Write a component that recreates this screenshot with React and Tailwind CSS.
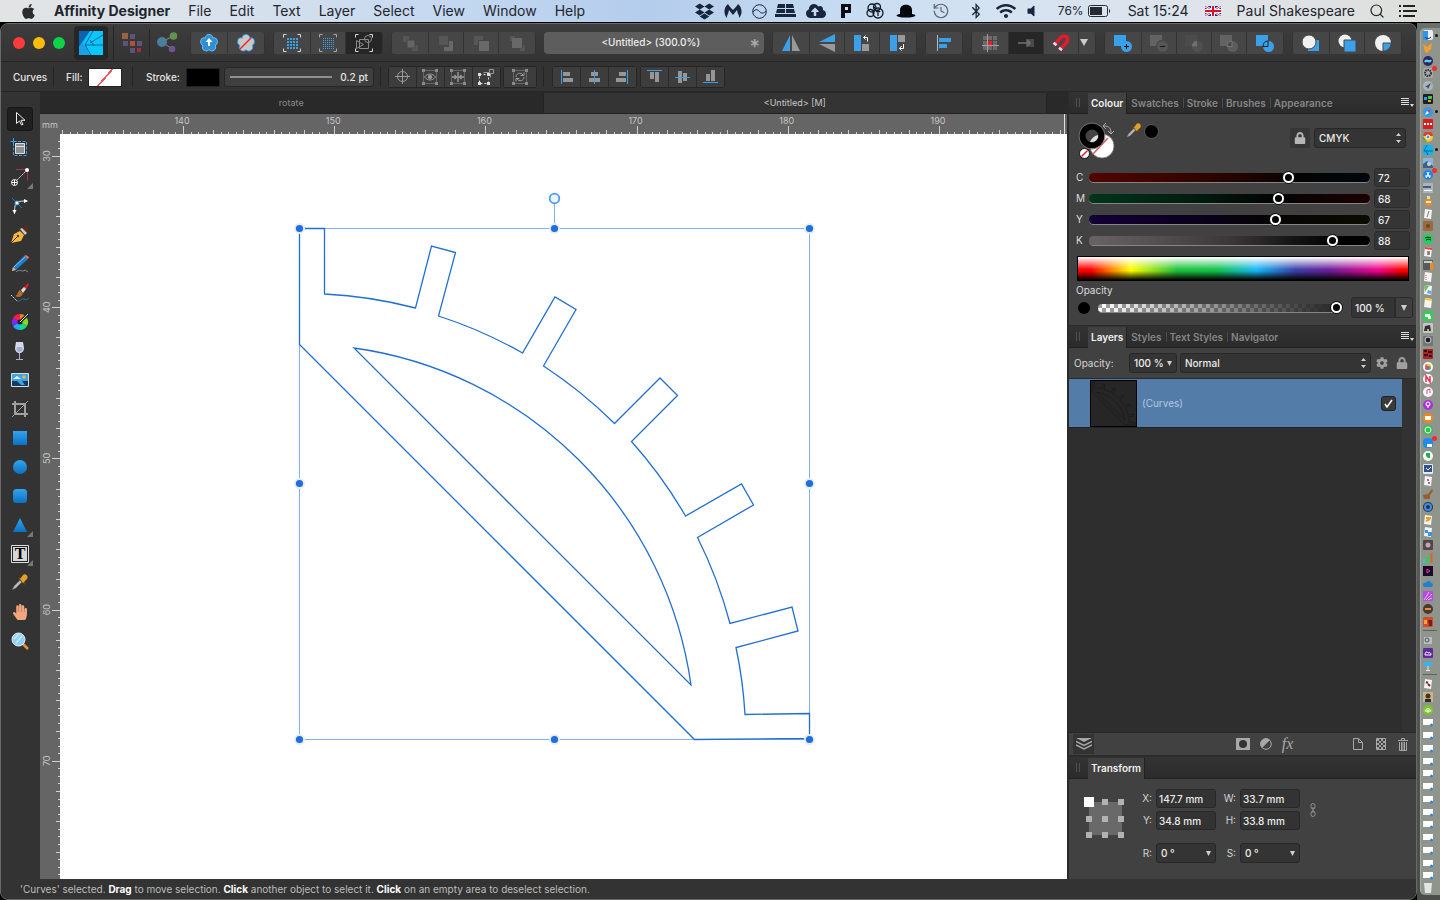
import { useState } from "react";
import {
  FaApple,
  FaBluetoothB,
  FaCloudUploadAlt,
  FaCog,
  FaDropbox,
  FaHandPaper,
  FaLock,
  FaVolumeOff,
  FaWifi,
} from "react-icons/fa";
import { History, Search } from "lucide-react";

const BLUE = "#3aa0e9";
const PX_PER_MM = 15.12;

const menus = ["File", "Edit", "Text", "Layer", "Select", "View", "Window", "Help"];

/* ---------- menu bar ---------- */

function MenuBar() {
  return (
    <header className="flex h-[22px] shrink-0 items-center justify-between bg-[linear-gradient(90deg,#e2e4e4,#d9e2ec_15%,#c3d7f0_32%,#b4cdec_45%,#c6dbf1_58%,#d3e2f2_68%,#dfe4ea_84%,#dedfda)] pr-[23px] pl-5 text-[14px] leading-[22px] text-[#22262c]">
      <nav className="flex items-center gap-[18px]">
        <button aria-label="Apple menu" className="w-4">
          <FaApple className="size-[17px] text-[#2c2c2c]" />
        </button>
        <button className="font-bold">Affinity Designer</button>
        {menus.map((menu) => (
          <button key={menu}>{menu}</button>
        ))}
      </nav>
      <div className="flex items-center">
        <div className="flex items-center text-[#17263c]">
          <FaDropbox className="size-[19px]" />
          <svg className="ml-2.5 h-4 w-[18px]" viewBox="0 0 18 16">
            <path
              d="M4 1C0 4-1 11 3 15c0-2 0-3 1-4l1-4 4 5 4-5 1 4c1 1 1 2 1 4 4-4 3-11-1-14-1 2-3 4-5 6C7 5 5 3 4 1z"
              fill="currentColor"
            />
          </svg>
          <svg className="ml-2.5 size-[15px]" viewBox="0 0 15 15">
            <circle cx="7.5" cy="7.5" r="6.8" fill="none" stroke="currentColor" />
            <path d="M1 8c3-4 5-2 7 0s4 1 6-1" fill="none" stroke="currentColor" />
          </svg>
          <svg className="ml-2 h-4 w-[21px]" viewBox="0 0 21 16" fill="currentColor">
            <path d="M3 1h7v4H2zM11 1h7l1 4h-8zM2 6h8v4H1zM11 6h8l1 4h-9zM0 11h21v3H0z" />
          </svg>
          <FaCloudUploadAlt className="ml-2.5 size-5" />
          <svg className="ml-3.5 h-4 w-3" viewBox="0 0 12 16">
            <path d="M1 1h10v9H5v5H1z" fill="#080d16" />
            <path d="M5 4h3v3H5z" fill="#d3e2f2" />
          </svg>
          <svg
            className="ml-3.5 size-[18px]"
            viewBox="0 0 18 18"
            fill="none"
            stroke="#101a28"
            strokeWidth="1.3"
          >
            <circle cx="6" cy="6" r="4" />
            <circle cx="11" cy="5" r="3.5" />
            <circle cx="4.5" cy="11" r="3.5" />
            <circle cx="12" cy="11" r="5" />
            <path d="M12 8v6M10 10l2-2 2 2M8 5l2 2" />
          </svg>
          <svg className="ml-3 h-4 w-5" viewBox="0 0 20 16" fill="#05070c">
            <path d="M4 12V7c0-7 12-7 12 0v5z" />
            <ellipse cx="10" cy="12.5" rx="9.5" ry="2" />
          </svg>
          <History className="ml-4 size-[18px] text-[#5a6472]" strokeWidth={1.6} />
          <FaBluetoothB className="ml-5 h-4 w-3" />
          <FaWifi className="ml-3.5 size-5" />
          <FaVolumeOff className="ml-2 size-[14px]" />
        </div>
        <span className="ml-5 text-[12px]">76%</span>
        <svg className="ml-1 h-3 w-[23px]" viewBox="0 0 23 12">
          <rect x=".5" y=".5" width="19" height="11" rx="2" fill="none" stroke="#252b33" />
          <rect x="2" y="2" width="12" height="8" fill="#252b33" />
          <path d="M21 4c1.5.5 1.5 3.5 0 4z" fill="#252b33" />
        </svg>
        <time className="ml-[17px]">Sat 15:24</time>
        <svg className="ml-4 h-[10px] w-4" viewBox="0 0 16 10">
          <path d="M0 0h16v10H0z" fill="#1c2c8c" />
          <path d="M0 0l16 10M16 0L0 10" stroke="#fff" strokeWidth="2.4" />
          <path d="M0 0l16 10M16 0L0 10" stroke="#d8203a" strokeWidth=".8" />
          <path d="M8 0v10M0 5h16" stroke="#fff" strokeWidth="4" />
          <path d="M8 0v10M0 5h16" stroke="#d8102a" strokeWidth="2.2" />
        </svg>
        <button className="ml-4">Paul Shakespeare</button>
        <button aria-label="Spotlight" className="ml-3.5">
          <Search className="size-4" strokeWidth={1.8} />
        </button>
        <button aria-label="Notification Centre" className="ml-3.5">
          <svg className="h-3 w-[18px]" viewBox="0 0 18 12" fill="#222">
            <path d="M0 0h2v2H0zM4 0h12v2H4zM0 5h2v2H0zM4 5h14v2H4zM0 10h2v2H0zM4 10h12v2H4z" />
          </svg>
        </button>
      </div>
    </header>
  );
}

/* ---------- main toolbar ---------- */

function Group({ label, children }) {
  return (
    <div
      role="group"
      aria-label={label}
      className="flex h-[22px] shrink-0 gap-px overflow-hidden rounded-[4px] bg-[#333] px-px"
    >
      {children}
    </div>
  );
}

function BarButton({ label, active, children }) {
  return (
    <button
      aria-label={label}
      aria-pressed={active}
      className={
        active
          ? "flex w-[34px] items-center justify-center bg-[#262626] first:w-9 last:w-9"
          : "flex w-[34px] items-center justify-center bg-[#464646] first:w-9 last:w-9"
      }
    >
      {children}
    </button>
  );
}

function Icon({ children }) {
  return (
    <svg className="size-5" viewBox="0 0 20 20" fill="none">
      {children}
    </svg>
  );
}

function Brackets({ color = "#d8d8d8" }) {
  return (
    <path
      d="M1.5 4.5v-3h3M15.5 1.5h3v3M18.5 15.5v3h-3M4.5 18.5h-3v-3"
      stroke={color}
    />
  );
}

const petals = [
  [10, 5.5],
  [14.5, 8.7],
  [12.8, 14],
  [7.2, 14],
  [5.5, 8.7],
];

function Flower({ fill, edge }) {
  return (
    <>
      {petals.map(([x, y]) => (
        <circle key={x} cx={x} cy={y} r="4.4" fill={edge} />
      ))}
      {petals.map(([x, y]) => (
        <circle key={x} cx={x} cy={y} r="3.4" fill={fill} />
      ))}
      <circle cx="10" cy="10.3" r="4.5" fill={fill} />
    </>
  );
}

function DotGrid({ count, size, step }) {
  const start = Math.ceil((20 - (count - 1) * step - size) / 2);
  const cells = Array.from({ length: count * count });
  return cells.map((_, i) => (
    <rect
      key={i}
      x={start + (i % count) * step}
      y={start + Math.floor(i / count) * step}
      width={size}
      height={size}
      fill={BLUE}
    />
  ));
}

function MainToolbar() {
  return (
    <div className="flex h-[38px] shrink-0 items-center gap-2 border-b border-[#252525] bg-linear-to-b from-[#3c3c3c] to-[#343434] pr-[14px] pl-3">
      <div className="flex gap-2">
        <button aria-label="Close" className="size-3 rounded-full bg-[#fc3b3c]" />
        <button aria-label="Minimise" className="size-3 rounded-full bg-[#fdbc09]" />
        <button aria-label="Zoom" className="size-3 rounded-full bg-[#0bd247]" />
      </div>

      <div className="mr-1 ml-px flex items-center">
        <button
          aria-label="Designer Persona"
          className="flex size-[34px] items-center justify-center rounded-[4px] bg-[#262626]"
        >
          <svg className="size-6" viewBox="0 0 24 24">
            <path d="M0 0h24v24H0z" fill="#06c8fd" />
            <path d="M0 0h11L0 16z" fill="#0b63b0" />
            <path d="M11 0L4 12l7 12H0V16z" fill="#18a0e8" />
            <path
              d="M14 0L6 14M24 4L11 12M6 14h18M6 14l6 10M11 9l4 6"
              stroke="#055f9c"
              fill="none"
            />
          </svg>
        </button>
        <span className="ml-[5px] h-[34px] w-px bg-[#262626]" />
        <button aria-label="Pixel Persona" className="ml-2">
          <svg className="size-5" viewBox="0 0 20 20">
            <path d="M0 0h6v6H0z" fill="#9c6240" />
            <path d="M8 1h5v5H8zM1 8h5v5H1zM15 8h5v5h-5zM8 15h5v5H8z" fill="#5b5478" />
            <path d="M8 8h5v5H8z" fill="#b14f3c" />
            <path d="M15 15h4v4h-4z" fill="#a32d3e" />
          </svg>
        </button>
        <span className="ml-[7px] h-[28px] w-px bg-[#262626]" />
        <button aria-label="Export Persona" className="ml-[7px]">
          <svg className="size-[21px]" viewBox="0 0 21 21">
            <path d="M5 10l11-6M5 10l10 7" stroke="#888" />
            <circle cx="5" cy="10" r="5" fill="#497e9e" />
            <circle cx="16.5" cy="4" r="3.8" fill="#66904f" />
            <circle cx="15" cy="17" r="3.3" fill="#6c5590" />
          </svg>
        </button>
      </div>

      <Group label="Defaults">
        <BarButton label="Synchronise from selection">
          <Icon>
            <Flower fill="#2f8fd6" edge="#6fbcf2" />
            <path d="M10 5l3.5 4H11v4H9V9H6.500z" fill="#fff" />
          </Icon>
        </BarButton>
        <BarButton label="Revert defaults">
          <Icon>
            <Flower fill="#c9c9c9" edge={BLUE} />
            <path d="M4 16L15 5" stroke="#e8252c" strokeWidth="1.5" />
          </Icon>
        </BarButton>
      </Group>

      <Group label="Grid">
        <BarButton label="Show grid">
          <Icon>
            <Brackets />
            <DotGrid count={4} size={2} step={3} />
          </Icon>
        </BarButton>
        <BarButton label="Snap to grid">
          <Icon>
            <Brackets color="#a8a8a8" />
            <DotGrid count={6} size={1} step={2} />
          </Icon>
        </BarButton>
        <BarButton label="Show bounds" active>
          <Icon>
            <Brackets />
            <path d="M5.5 6.5h9v9h-9zM2.500 7.5l7 4-7 4z" stroke="#8a8a8a" />
            <circle cx="14" cy="6" r="3.5" stroke="#8a8a8a" />
          </Icon>
        </BarButton>
      </Group>

      <Group label="Arrange">
        <BarButton label="Move to back">
          <Icon>
            <path d="M3 3h6v6H3zM12 12h6v6h-6z" fill="#565656" />
            <path d="M7 7h8v8H7z" fill="#646464" stroke="#464646" />
          </Icon>
        </BarButton>
        <BarButton label="Move back one">
          <Icon>
            <path d="M3 3h9v9H3z" fill="#565656" />
            <path d="M13 8h4v10H8v-4h5z" fill="#686868" />
          </Icon>
        </BarButton>
        <BarButton label="Move forward one">
          <Icon>
            <path d="M3 3h9v4H7v5H3z" fill="#565656" />
            <path d="M8 8h10v10H8z" fill="#686868" />
          </Icon>
        </BarButton>
        <BarButton label="Move to front">
          <Icon>
            <path d="M3 3h5v2H5v3H3zM13 15h3v-3h2v6h-5z" fill="#565656" />
            <path d="M5 5h10v10H5z" fill="#686868" />
          </Icon>
        </BarButton>
      </Group>

      <div className="flex h-[22px] min-w-0 flex-1 items-center rounded-[4px] bg-[#5d5d5d] px-1 text-[10px] font-medium text-[#ececec]">
        <span className="flex-1 truncate pl-1 text-center">&lt;Untitled&gt; (300.0%)</span>
        <span className="h-4 text-[20px] leading-6 text-[#aaa]">*</span>
      </div>

      <Group label="Transform">
        <BarButton label="Flip horizontal">
          <Icon>
            <path d="M9 2v16H1z" fill={BLUE} />
            <path d="M11 2v16h8z" fill="#999" />
          </Icon>
        </BarButton>
        <BarButton label="Flip vertical">
          <Icon>
            <path d="M2 9h16V1z" fill={BLUE} />
            <path d="M2 11h16v8z" fill="#999" />
          </Icon>
        </BarButton>
        <BarButton label="Rotate anticlockwise">
          <Icon>
            <path d="M2 2h7v16H2z" fill={BLUE} />
            <path d="M10 11h7v7h-7z" fill="#999" />
            <path d="M12 4.5h3.5v4M13.5 2.5l-2 2 2 2" stroke="#fff" />
          </Icon>
        </BarButton>
        <BarButton label="Rotate clockwise">
          <Icon>
            <path d="M2 2h7v16H2z" fill={BLUE} />
            <path d="M10 2h7v7h-7z" fill="#999" />
            <path d="M15.5 11v4.5h-4M13.5 13l-2 2.500 2 2" stroke="#fff" />
          </Icon>
        </BarButton>
      </Group>

      <Group label="Alignment">
        <BarButton label="Align">
          <Icon>
            <path d="M3.5 2v16" stroke="#bbb" />
            <path d="M5 5h12v4H5zM5 11h8v4H5z" fill={BLUE} />
          </Icon>
        </BarButton>
      </Group>

      <Group label="Snapping">
        <BarButton label="Force pixel alignment">
          <Icon>
            <path
              d="M3 3h4v4H3zM8 3h4v4H8zM13 3h4v4h-4zM3 8h4v4H3zM13 8h4v4h-4zM3 13h4v4H3zM8 13h4v4H8zM13 13h4v4h-4z"
              fill="#6a6a6a"
            />
            <path d="M7.5 1v18M2 12.5h17" stroke="#a0a0a0" />
            <path d="M8 8h4v4H8z" fill="#f51b28" />
          </Icon>
        </BarButton>
        <BarButton label="Move by whole pixels" active>
          <Icon>
            <path d="M10 6h8v8h-8z" fill="#4a4a4a" />
            <path d="M2 10h12M11 7l3 3-3 3" stroke="#727272" strokeWidth="1.5" />
          </Icon>
        </BarButton>
        <BarButton label="Snapping">
          <Icon>
            <path
              d="M4 11l6-6.500c4-4 9 1 5.500 5L9.500 16"
              stroke="#e8192c"
              strokeWidth="3.6"
            />
            <path d="M2.500 9.700l3 2.600M8 14.700l3 2.600" stroke="#f0d5d8" strokeWidth="2.6" />
          </Icon>
        </BarButton>
        <button
          aria-label="Snapping options"
          className="flex w-4 items-center justify-center bg-[#464646]"
        >
          <svg className="mr-1.5 h-[7px] w-2" viewBox="0 0 8 7">
            <path d="M0 0h8L4 7z" fill="#ccc" />
          </svg>
        </button>
      </Group>

      <Group label="Boolean operations">
        <BarButton label="Add">
          <Icon>
            <path d="M1 2h12v11H1z" fill={BLUE} />
            <circle cx="13.5" cy="13.5" r="5.5" fill={BLUE} />
            <path d="M11 13.5h5M13.5 11v5" stroke="#151515" />
          </Icon>
        </BarButton>
        <BarButton label="Subtract">
          <Icon>
            <path d="M1 2h12v5c-4 0-6 3-6 6H1z" fill="#636363" />
            <circle cx="13.5" cy="13.5" r="5.5" fill="#555" />
            <path d="M11 13.5h5" stroke="#151515" />
          </Icon>
        </BarButton>
        <BarButton label="Intersect">
          <Icon>
            <path d="M1 2h12v11H1z" fill="#4c4c4c" />
            <circle cx="13.5" cy="13.5" r="5.5" fill="#505050" />
            <path d="M13 8v5.5H8C8 10 10 8 13 8z" fill="#707070" />
          </Icon>
        </BarButton>
        <BarButton label="Divide">
          <Icon>
            <path d="M1 2h12v11H1z" fill="#636363" />
            <circle cx="13.5" cy="13.5" r="5.5" fill="#5d5d5d" />
            <path d="M13 8v5.5H8C8 10 10 8 13 8z" fill="#484848" stroke="#777" />
          </Icon>
        </BarButton>
        <BarButton label="Combine">
          <Icon>
            <path d="M1 2h12v11H1z" fill={BLUE} />
            <circle cx="13.5" cy="13.5" r="5.5" fill={BLUE} />
            <path d="M13 8v5.5H8C8 10 10 8 13 8z" fill={BLUE} stroke="#222" />
          </Icon>
        </BarButton>
      </Group>

      <Group label="Insert target">
        <BarButton label="Insert behind">
          <Icon>
            <path d="M7 7h11v11H7z" fill={BLUE} />
            <circle cx="8" cy="9" r="7" fill="#f0f0f0" stroke="#464646" />
          </Icon>
        </BarButton>
        <BarButton label="Insert on top">
          <Icon>
            <circle cx="8" cy="8" r="6.5" fill="#f0f0f0" />
            <path d="M7 7h12v12H7z" fill={BLUE} stroke="#464646" />
          </Icon>
        </BarButton>
        <BarButton label="Insert inside">
          <Icon>
            <circle cx="10" cy="10" r="8" fill="#f0f0f0" />
            <path d="M10 10h8c0 5-4 8-8 8z" fill={BLUE} stroke="#464646" />
          </Icon>
        </BarButton>
      </Group>
    </div>
  );
}

/* ---------- context toolbar ---------- */

function SmallGroup({ label, children }) {
  return (
    <div
      role="group"
      aria-label={label}
      className="flex h-[22px] shrink-0 gap-px rounded-[3px] border border-[#252525] bg-[#2a2a2a]"
    >
      {children}
    </div>
  );
}

function SmallButton({ label, children }) {
  return (
    <button
      aria-label={label}
      className="flex w-[27px] items-center justify-center bg-[#3d3d3d]"
    >
      <svg className="h-4 w-[17px]" viewBox="0 0 17 16" fill="none" stroke="#9a9a9a">
        {children}
      </svg>
    </button>
  );
}

function CornerDots() {
  return (
    <>
      <path d="M1.5 1.5h13v13h-13z" stroke="#666" />
      <path d="M0 0h3v3H0zM13 0h3v3h-3zM0 13h3v3H0zM13 13h3v3h-3z" fill="#8a8a8a" stroke="none" />
    </>
  );
}

function Separator() {
  return <span className="h-5 w-px shrink-0 bg-[#242424]" />;
}

function ContextToolbar() {
  return (
    <div className="flex h-[30px] shrink-0 items-center border-b border-[#282828] bg-[#333] pt-px pl-3 text-[10px] font-medium text-[#e4e4e4]">
      <span className="w-10">Curves</span>
      <Separator />
      <span className="ml-3 w-[22px]">Fill:</span>
      <button
        aria-label="Fill colour"
        className="h-[19px] w-[34px] border border-[#222] bg-[linear-gradient(131deg,#fff_48%,#f0575d_48%,#f0575d_53%,#fff_53%)]"
      />
      <span className="w-2.5" />
      <Separator />
      <span className="ml-[13px] w-10">Stroke:</span>
      <button aria-label="Stroke colour" className="h-[19px] w-[34px] border border-[#222] bg-black" />
      <button
        aria-label="Stroke width"
        className="mr-1.5 ml-1 flex h-5 w-[150px] items-center gap-2 rounded-[3px] border border-[#262626] bg-[#3f3f3f] px-[5px]"
      >
        <span className="h-0.5 flex-1 bg-[#8f8f8f]" />
        0.2 pt
      </button>
      <Separator />
      <div className="mr-1.5 ml-[7px] flex gap-0.5">
        <SmallGroup label="Selection">
          <SmallButton label="Show centre">
            <circle cx="8.5" cy="7.5" r="5" />
            <path d="M8.5 0v15M1 7.5h15" />
          </SmallButton>
          <SmallButton label="Hide selection">
            <CornerDots />
            <path d="M2.5 8c3-4 8-4 11 0-3 4-8 4-11 0z" />
            <circle cx="8" cy="8" r="1.8" fill="#9a9a9a" />
          </SmallButton>
          <SmallButton label="Transform separately">
            <CornerDots />
            <path d="M8 3v10M2 8h4M10 8h4M4.5 6l2 2-2 2M11.5 6l-2 2 2 2" strokeWidth="1.4" />
          </SmallButton>
          <SmallButton label="Transform mode">
            <path d="M5.5 3.5h6v-3h4v4h-3v4" />
            <path d="M1.5 5.5h9v9h-9z" stroke="#ddd" strokeDasharray="2 2" />
            <path d="M0 4h3v3H0zM9 4h3v3H9zM0 13h3v3H0zM9 13h3v3H9z" fill="#ddd" stroke="none" />
          </SmallButton>
        </SmallGroup>
        <SmallGroup label="Cycle">
          <button
            aria-label="Cycle selection box"
            className="flex w-8 items-center justify-center bg-[#3d3d3d]"
          >
            <svg className="size-4" viewBox="0 0 16 16" fill="none" stroke="#9a9a9a">
              <CornerDots />
              <path d="M4 8c0-4 5-5 7-2M12 8c0 4-5 5-7 2M8.5 6.5H12V3.5M7.5 9.5H4v3" />
            </svg>
          </button>
        </SmallGroup>
      </div>
      <Separator />
      <div className="ml-2 flex gap-[3px]">
        <SmallGroup label="Horizontal alignment">
          <SmallButton label="Align left">
            <path d="M5 3h7v4H5zM5 9h10v4H5z" fill="#969696" stroke="none" />
            <path d="M3.5 1v14" stroke={BLUE} />
          </SmallButton>
          <SmallButton label="Align centre">
            <path d="M5 3h7v4H5zM3 9h11v4H3z" fill="#969696" stroke="none" />
            <path d="M8.5 1v14" stroke={BLUE} />
          </SmallButton>
          <SmallButton label="Align right">
            <path d="M5 3h7v4H5zM2 9h10v4H2z" fill="#969696" stroke="none" />
            <path d="M13.5 1v14" stroke={BLUE} />
          </SmallButton>
        </SmallGroup>
        <SmallGroup label="Vertical alignment">
          <SmallButton label="Align top">
            <path d="M4 3h4v7H4zM9 3h4v10H9z" fill="#969696" stroke="none" />
            <path d="M1 1.5h15" stroke={BLUE} />
          </SmallButton>
          <SmallButton label="Align middle">
            <path d="M4 2h4v12H4zM9 4h4v8H9z" fill="#969696" stroke="none" />
            <path d="M1 8.5h15" stroke={BLUE} />
          </SmallButton>
          <SmallButton label="Align bottom">
            <path d="M4 5h4v7H4zM9 1h4v11H9z" fill="#969696" stroke="none" />
            <path d="M1 13.5h15" stroke={BLUE} />
          </SmallButton>
        </SmallGroup>
      </div>
    </div>
  );
}

/* ---------- tools ---------- */

function Dropper() {
  return (
    <>
      <path d="M2 17l2-4 6-6 2 2-6 6z" fill="#b8b8b8" stroke="#555" strokeWidth=".5" />
      <path d="M9 5l6 6" stroke="#6b4a12" strokeWidth="2" />
      <path d="M10 6l3-4c2-2 6 1 4 4l-4 4z" fill="#e0a02a" />
    </>
  );
}

const tools = [
  {
    name: "Move Tool",
    art: <path d="M6.5 3.5v11l3-2.500 2 4 1.500-.7-2-4h4z" fill="#222" stroke="#eee" />,
  },
  {
    name: "Artboard Tool",
    art: (
      <>
        <path d="M3.5 3.5h13v14h-13z" stroke={BLUE} strokeDasharray="3 1.5" />
        <path d="M3.5 0v6M.5 3.5h6" stroke={BLUE} />
        <path d="M5.5 5.5h9v10h-9z" fill="#8f8f8f" stroke="#ddd" />
        <path d="M6 8.5h9" stroke="#ddd" />
      </>
    ),
  },
  {
    name: "Point Transform Tool",
    more: true,
    art: (
      <>
        <path d="M6 2.5h11.5v11" stroke="#a82e68" />
        <path d="M5 15L17 3" stroke="#ddd" strokeDasharray="2 1" />
        <circle cx="17" cy="3" r="2" fill="#fff" />
        <circle cx="4.5" cy="15.5" r="3" fill="#222" stroke="#fff" />
        <path d="M4.5 13v5M2 15.5h5" stroke="#fff" />
      </>
    ),
  },
  {
    name: "Node Tool",
    art: (
      <>
        <path d="M2 2l10 10" stroke="#2678b8" />
        <path d="M4.5 18c0-8 1-11 2.5-12 3-1 6-1 10-1" stroke="#ddd" />
        <path d="M14 3l4 2-4 2zM2.5 14l2 4 2-4z" fill="#fff" />
        <circle cx="7" cy="7" r="2" fill="#fff" stroke={BLUE} />
      </>
    ),
  },
  {
    name: "Pen Tool",
    art: (
      <>
        <path d="M13 4l3-3 3 2-3 4z" fill="#6e2415" />
        <path d="M10 4l2-1 5 5-2 2z" fill="#ccc" />
        <path d="M1 18l3-9 6-3 4 4-3 6z" fill="#f5b93f" />
        <path d="M1 18l6-6" stroke="#5a3a0c" />
        <circle cx="8" cy="11" r="1.2" fill="#5a3a0c" />
      </>
    ),
  },
  {
    name: "Pencil Tool",
    art: (
      <>
        <path d="M2 17l1-4L14 2l4 3L6 16z" fill="#1c7fd0" />
        <path d="M4 13L15 3" stroke="#7cc4f5" />
        <path d="M2 17l1-4 3 3z" fill="#f2b070" />
        <path d="M14 2l2-1 3 2-1 2z" fill="#e8745f" />
        <path d="M6 18c4-4 6 1 9-2l3 2" stroke="#8a8a8a" />
      </>
    ),
  },
  {
    name: "Vector Brush Tool",
    art: (
      <>
        <path d="M13 5l5-5 1 1-3 6z" fill="#e01b24" />
        <path d="M11 7l3-3 2 2-3 4z" fill="#ddd" />
        <path d="M5 13c3-1 2-4 5-6l3 3c-1 4-4 5-8 3z" fill="#b06b28" />
        <path d="M1 12l6 6" stroke="#ddd" strokeDasharray="2 1" />
        <path d="M7 18c3 1 5-3 7-2s3 1 5-1" stroke="#2e74b0" />
      </>
    ),
  },
  {
    name: "Fill Tool",
    art: (
      <>
        <path d="M10 10V2a8 8 0 0 1 7 4z" fill="#f7801d" />
        <path d="M10 10l7-4a8 8 0 0 1 0 8z" fill="#7ddc1f" />
        <path d="M10 10l7 4a8 8 0 0 1-7 4z" fill="#12d68a" />
        <path d="M10 10v8a8 8 0 0 1-7-4z" fill="#26a8f2" />
        <path d="M10 10l-7 4a8 8 0 0 1 0-8z" fill="#7a2af5" />
        <path d="M10 10L3 6a8 8 0 0 1 7-4z" fill="#f0204a" />
        <circle cx="10" cy="10" r="2.5" fill="#222" />
        <path d="M10 10l8-8" stroke="#222" strokeWidth="3" />
        <path d="M10 10l8-8" stroke="#ddd" />
      </>
    ),
  },
  {
    name: "Transparency Tool",
    art: (
      <>
        <path d="M6 1h7l1 6c0 3-2 5-4.5 5S5 10 5 7z" fill="#d3d9ea" />
        <path d="M7 6h5l.5 2c0 4-6 4-6 0z" fill="#a5aecb" />
        <path d="M9.5 12v6M6 18.5h7" stroke="#a7b0c9" />
      </>
    ),
  },
  {
    name: "Place Image Tool",
    art: (
      <>
        <path d="M1.5 3.5h17v13h-17z" fill="#3aa5ea" stroke="#ddd" />
        <path d="M2 11h16v5H2z" fill="#173a63" />
        <path d="M7 11h5l3 4h-4z" fill="#3aa5ea" />
        <path d="M3 9l4-3 4 3z" fill="#fff" />
        <circle cx="14" cy="7" r="1.8" fill="#f7b81d" />
      </>
    ),
  },
  {
    name: "Vector Crop Tool",
    art: (
      <>
        <path d="M5 2v13h13M2 5h13v13" stroke="#a0a0a0" strokeWidth="2" />
        <path d="M2 18L18 2" stroke="#a0a0a0" />
      </>
    ),
  },
  { name: "Rectangle Tool", art: <path d="M3 3h14v14H3z" fill="url(#shape)" /> },
  { name: "Ellipse Tool", art: <circle cx="10" cy="10" r="7" fill="url(#shape)" /> },
  {
    name: "Rounded Rectangle Tool",
    art: <rect x="3" y="3" width="14" height="14" rx="3.5" fill="url(#shape)" />,
  },
  { name: "Triangle Tool", more: true, art: <path d="M10 3l7 14H3z" fill="url(#shape)" /> },
  {
    name: "Artistic Text Tool",
    more: true,
    art: (
      <>
        <path d="M1.5 1.5h17v17h-17z" fill="#222" stroke="#ddd" />
        <path d="M3 3h14v14H3z" fill="#d5d5d5" />
        <text
          x="10"
          y="15"
          textAnchor="middle"
          fill="#000"
          className="font-['Liberation_Serif',serif] text-[16px] font-bold"
        >
          T
        </text>
      </>
    ),
  },
  { name: "Colour Picker Tool", art: <Dropper /> },
  { name: "View Tool", art: <FaHandPaper x="2" y="2" size="16" color="#f0a77c" /> },
  {
    name: "Zoom Tool",
    art: (
      <>
        <path d="M13 13l5 5" stroke="#e8923a" strokeWidth="2.5" />
        <circle cx="8.5" cy="8.5" r="6.5" fill="#8fd0fa" stroke="#e8eef2" />
        <path d="M4 8l5-5M6 12l6-7" stroke="#c9eaff" strokeWidth="1.5" />
      </>
    ),
  },
];

function ToolsPanel() {
  const [current, setCurrent] = useState("Move Tool");

  return (
    <aside className="flex w-[39px] shrink-0 flex-col items-start overflow-hidden bg-[#333] pt-3 pl-1.5">
      <svg className="absolute size-0">
        <linearGradient id="shape" x2="0" y2="1">
          <stop stopColor="#35a3ee" />
          <stop offset="1" stopColor="#0a72c2" />
        </linearGradient>
      </svg>
      {tools.map((tool) => (
        <button
          key={tool.name}
          aria-label={tool.name}
          onClick={() => setCurrent(tool.name)}
          className="relative flex h-[29px] w-[26px] shrink-0 items-center justify-center"
        >
          <span
            className={
              tool.name === current
                ? "flex h-6 w-[26px] items-center justify-center rounded-[3px] border border-[#161616] bg-[#202020]"
                : "flex h-6 w-[26px] items-center justify-center"
            }
          >
            <Icon>{tool.art}</Icon>
          </span>
          {tool.more && (
            <svg className="absolute right-0 bottom-0.5 size-[6px]" viewBox="0 0 6 6">
              <path d="M6 0v6H0z" fill="#777" />
            </svg>
          )}
        </button>
      ))}
    </aside>
  );
}

/* ---------- document ---------- */

function buildTicks(origin, length) {
  const ticks = [];
  const first = Math.ceil(-origin / (PX_PER_MM / 2));
  for (let i = first; origin + (i * PX_PER_MM) / 2 < length; i++) {
    const size = i % 20 === 0 ? 8 : i % 4 === 0 ? 4 : 2;
    ticks.push({ at: Math.round(origin + (i * PX_PER_MM) / 2), size });
  }
  return ticks;
}

const columnTicks = buildTicks(123, 2600);
const rowTicks = buildTicks(22, 1600);

function TopRuler() {
  return (
    <svg className="h-5 min-w-0 flex-1 bg-[#656565]" shapeRendering="crispEdges">
      {columnTicks.map((tick) => (
        <rect key={tick.at} x={tick.at} y={20 - tick.size} width="1" height={tick.size} fill="#d0d0d0" />
      ))}
      {[140, 150, 160, 170, 180, 190].map((mm, i) => (
        <text
          key={mm}
          x={122 + i * 10 * PX_PER_MM}
          y="10"
          textAnchor="middle"
          fill="#c4c4c4"
          className="text-[9px]"
        >
          {mm}
        </text>
      ))}
      <rect x="1004" width="1" height="20" fill="#e0e0e0" />
    </svg>
  );
}

function SideRuler() {
  return (
    <svg className="h-full w-5 shrink-0 bg-[#656565]" shapeRendering="crispEdges">
      {rowTicks.map((tick) => (
        <rect key={tick.at} x={20 - tick.size} y={tick.at} width={tick.size} height="1" fill="#d0d0d0" />
      ))}
      {[30, 40, 50, 60, 70].map((mm, i) => (
        <text
          key={mm}
          transform={`translate(10 ${22 + i * 10 * PX_PER_MM}) rotate(-90)`}
          textAnchor="middle"
          fill="#c4c4c4"
          className="text-[9px]"
        >
          {mm}
        </text>
      ))}
    </svg>
  );
}

const gearOutline =
  "M239.5 94.5H264.5V160A446 446 0 0 1 355.5 174L371.5 112L395.5 118.5L378.5 182A446 446 0 0 1 462.5 219L495 163L516 175.5L483.5 232A446 446 0 0 1 554.5 289.5L600 244L617.5 261.5L571.5 307.5A446 446 0 0 1 625.5 382L681.5 350L693.5 371L637.5 403.5A446 446 0 0 1 670 489.5L732 473L738 497L676 513.5A446 446 0 0 1 685 580.5L749.5 579.5V604.5L634.5 605.5L239.5 210.5Z";
const windowOutline = "M294 214A395.5 395.5 0 0 1 631 551Z";

const handles = [
  [239.5, 94.5],
  [494.5, 94.5],
  [749.5, 94.5],
  [239.5, 349.5],
  [749.5, 349.5],
  [239.5, 605.5],
  [494.5, 605.5],
  [749.5, 605.5],
];

function Canvas() {
  return (
    <svg className="h-full min-w-0 flex-1 bg-white" fill="none" role="img" aria-label="Drawing canvas">
      <rect x="239.5" y="94.5" width="510" height="511" stroke="#7fb2ec" />
      <path d="M494.5 69v25" stroke="#7fb2ec" />
      <path d={gearOutline} stroke="#226fd2" strokeWidth="1.3" />
      <path d={windowOutline} stroke="#226fd2" strokeWidth="1.3" />
      {handles.map(([x, y]) => (
        <g key={`${x}-${y}`}>
          <circle cx={x} cy={y} r="5.5" fill="#e9ecf1" />
          <circle cx={x} cy={y} r="3.6" fill="#1c6fdc" />
        </g>
      ))}
      <circle cx="494.5" cy="64.5" r="4.8" fill="#eef4fb" stroke="#4b9cf2" strokeWidth="1.8" />
    </svg>
  );
}

function DocumentArea() {
  return (
    <main className="flex min-w-0 flex-1 flex-col">
      <div className="flex h-[22px] shrink-0 border-b border-[#222] bg-[#292929] pt-px pr-5 text-[9px] text-[#c8c8c8]">
        <button className="flex-1 text-[#8a8a8a]">rotate</button>
        <button className="flex-1 border-x border-[#242424] bg-[#343434]">&lt;Untitled&gt; [M]</button>
      </div>
      <div className="flex shrink-0">
        <span className="h-5 w-5 bg-[#656565] text-center text-[9px] leading-[22px] text-[#c4c4c4]">
          mm
        </span>
        <TopRuler />
      </div>
      <div className="flex min-h-0 flex-1">
        <SideRuler />
        <Canvas />
      </div>
    </main>
  );
}

/* ---------- panels ---------- */

function PanelTabs({ tabs }) {
  return (
    <div className="flex h-[22px] shrink-0 items-end border-b border-[#222] bg-linear-to-b from-[#333] to-[#2b2b2b] pl-[7px] text-[10px] font-semibold text-[#858585]">
      <span className="mr-2 h-[9px] w-1 self-center border-x border-[#505050]" />
      {tabs.map((tab, i) => (
        <button
          key={tab}
          className={
            i === 0
              ? "-mb-px h-[21px] border-r border-[#222] bg-[#414141] px-[3px] text-[#f0f0f0]"
              : "flex h-5 items-center gap-[3px] pl-1"
          }
        >
          {i > 1 && <span className="h-[10px] w-px bg-[#4a4a4a]" />}
          {tab}
        </button>
      ))}
      {tabs.length > 1 && (
        <button aria-label="Panel options" className="mr-[2px] mb-1.5 ml-auto">
          <svg className="h-[9px] w-[13px]" viewBox="0 0 13 9">
            <path d="M0 .5h8M0 2.5h8M0 4.5h8M0 6.5h8" stroke="#ddd" />
            <path d="M9 6h4l-2 3z" fill="#ddd" />
          </svg>
        </button>
      )}
    </div>
  );
}

function Picker({ label, className, options, updown }) {
  return (
    <div className={`grid items-center ${className}`}>
      <select
        aria-label={label}
        className="col-start-1 row-start-1 h-5 w-full appearance-none rounded-[3px] border border-[#272727] bg-[#343434] px-1 text-[10px] font-medium text-[#ececec]"
      >
        {options.map((option) => (
          <option key={option}>{option}</option>
        ))}
      </select>
      <svg
        className="pointer-events-none col-start-1 row-start-1 mr-[5px] h-[10px] w-[5px] justify-self-end"
        viewBox="0 0 5 10"
        fill="#d0d0d0"
      >
        {updown ? <path d="M0 3l2.5-3L5 3zM0 7h5L2.5 10z" /> : <path d="M0 3h5L2.5 8z" />}
      </svg>
    </div>
  );
}

const thumb =
  "[&::-webkit-slider-thumb]:size-[11px] [&::-webkit-slider-thumb]:appearance-none [&::-webkit-slider-thumb]:rounded-full [&::-webkit-slider-thumb]:border-2 [&::-webkit-slider-thumb]:border-white [&::-webkit-slider-thumb]:bg-black [&::-webkit-slider-thumb]:shadow-[0_0_0_1px_#111]";

const channels = [
  {
    name: "C",
    value: 72,
    track: "bg-[linear-gradient(90deg,#520500,#260400_50%,#030303_75%,#02070b)]",
  },
  {
    name: "M",
    value: 68,
    track: "bg-[linear-gradient(90deg,#00351b,#001a0d_40%,#030404_65%,#1c0003)]",
  },
  {
    name: "Y",
    value: 67,
    track: "bg-[linear-gradient(90deg,#130036,#0b001e_35%,#050404_65%,#0b0b00)]",
  },
  {
    name: "K",
    value: 88,
    track: "bg-[linear-gradient(90deg,#696365,#3c3839_50%,#111_75%,#000_90%)]",
  },
];

function ChannelRow({ channel }) {
  const [value, setValue] = useState(channel.value);

  return (
    <div className="flex h-[21px] items-center">
      <label htmlFor={`channel-${channel.name}`} className="w-3 text-[10px]">
        {channel.name}
      </label>
      <input
        id={`channel-${channel.name}`}
        type="range"
        min="0"
        max="100"
        value={value}
        onChange={(event) => setValue(event.target.value)}
        className={`mr-1 ml-px h-[9px] min-w-0 flex-1 appearance-none rounded-full shadow-[0_1px_0_#858585] ${channel.track} ${thumb}`}
      />
      <input
        aria-label={`${channel.name} value`}
        value={value}
        onChange={(event) => setValue(event.target.value)}
        className="h-[19px] w-9 rounded-[3px] border border-[#2b2b2b] bg-[#353535] px-[3px] text-[10px] font-medium text-[#ececec]"
      />
    </div>
  );
}

function ColourPanel() {
  return (
    <section className="shrink-0 border-b border-[#2a2a2a]">
      <PanelTabs tabs={["Colour", "Swatches", "Stroke", "Brushes", "Appearance"]} />
      <div className="pt-2 pr-1.5 pb-[7px] pl-[7px] text-[#dcdcdc]">
        <div className="flex h-[45px] items-start">
          <button aria-label="Stroke and fill wells">
            <svg className="h-10 w-[42px]" viewBox="0 0 42 40" fill="none">
              <circle cx="26" cy="24" r="12" fill="#fff" stroke="#777" strokeWidth=".8" />
              <path d="M17 32l15-16" stroke="#e0555a" strokeWidth="1.5" />
              <circle cx="16" cy="14" r="7" fill="#444" />
              <path d="M14 20c1-3 4-6 8-7 1 4-3 8-8 7z" fill="#ddd" />
              <circle cx="16" cy="14" r="9.5" stroke="#000" strokeWidth="6" />
              <circle cx="16" cy="14" r="13" stroke="#777" strokeWidth=".8" />
              <circle cx="8.5" cy="31.5" r="5" fill="#fff" stroke="#111" />
              <path d="M5.5 34.5l6-6" stroke="#e01b24" strokeWidth="1.5" />
              <path d="M28 4c5 0 7 2 7 7M30 1l-3 3 3 3M32 9l3 3 3-3" stroke="#aaa" />
            </svg>
          </button>
          <button aria-label="Pick colour" className="ml-[7px]">
            <svg className="size-[18px]" viewBox="0 0 20 20" fill="none">
              <Dropper />
            </svg>
          </button>
          <button
            aria-label="Picked colour"
            className="mt-0.5 ml-px size-[15px] rounded-full border border-[#5e5e5e] bg-black"
          />
          <button
            aria-label="Lock colour"
            className="mt-1.5 mr-1 ml-auto flex h-5 w-5 items-center justify-center bg-[#363636]"
          >
            <FaLock className="size-3 text-[#b5b5b5]" />
          </button>
          <Picker
            label="Colour model"
            className="mt-1.5 mr-1 w-[92px]"
            options={["CMYK", "RGB", "HSL"]}
            updown
          />
        </div>
        {channels.map((channel) => (
          <ChannelRow key={channel.name} channel={channel} />
        ))}
        <div
          role="img"
          aria-label="Colour spectrum"
          className="mt-[5px] mr-px ml-px h-[25px] border border-black bg-[linear-gradient(180deg,#fff,#fff0_55%,#0000_60%,#000),linear-gradient(90deg,#f00_4%,#ff0_16%,#1ec23c_30%,#14c24a_42%,#16b8f5_54%,#3a3fa8_66%,#6a1f9a_76%,#f0058c_91%,#f00_98%)]"
        />
        <label htmlFor="colour-opacity" className="mt-[2px] block text-[10px] leading-[14px]">
          Opacity
        </label>
        <div className="flex h-[21px] items-center">
          <span className="ml-[2px] size-3 rounded-full bg-black" />
          <input
            id="colour-opacity"
            type="range"
            defaultValue="100"
            className={`mr-[9px] ml-2 h-2 min-w-0 flex-1 appearance-none rounded-full bg-[linear-gradient(90deg,transparent,#2c2c2c_95%),repeating-conic-gradient(#fff_0_25%,#a0a0a0_0_50%)] bg-[length:100%_100%,8px_8px] shadow-[0_1px_0_#858585] ${thumb}`}
          />
          <input
            aria-label="Opacity value"
            defaultValue="100 %"
            className="h-[21px] w-11 rounded-l-[3px] border border-[#2b2b2b] bg-[#353535] px-[3px] text-[10px] font-medium text-[#ececec]"
          />
          <button
            aria-label="Opacity options"
            className="-mr-[3px] flex h-[21px] w-[18px] items-center justify-center rounded-r-[3px] border border-[#2b2b2b] bg-[#3f3f3f]"
          >
            <svg className="h-[6px] w-[6px]" viewBox="0 0 6 6">
              <path d="M0 0h6L3 6z" fill="#ccc" />
            </svg>
          </button>
        </div>
      </div>
    </section>
  );
}

function LayersPanel() {
  const [visible, setVisible] = useState(true);

  return (
    <section className="flex min-h-0 flex-1 flex-col">
      <PanelTabs tabs={["Layers", "Styles", "Text Styles", "Navigator"]} />
      <div className="flex h-[31px] shrink-0 items-center border-b border-[#2a2a2a] pr-2 pl-[5px] text-[10px] text-[#d4d4d4]">
        <span className="w-[55px]">Opacity:</span>
        <Picker label="Layer opacity" className="mr-[3px] w-12" options={["100 %", "50 %"]} />
        <Picker
          label="Blend mode"
          className="min-w-0 flex-1"
          options={["Normal", "Multiply", "Screen"]}
          updown
        />
        <button aria-label="Blend ranges" className="ml-[5px]">
          <FaCog className="size-3 text-[#a0a0a0]" />
        </button>
        <button aria-label="Lock layer" className="ml-2">
          <FaLock className="size-3 text-[#a0a0a0]" />
        </button>
      </div>
      <div className="flex min-h-0 flex-1">
        <ul className="min-w-0 flex-1 bg-[#2e2e2e]">
          <li className="flex h-[49px] items-center border-b border-[#232323] bg-[#537ca9] pr-1.5 pl-[21px]">
            <svg className="size-[47px] border border-black bg-[#262626]" viewBox="225 80 540 540" fill="none">
              <path d={gearOutline} stroke="#1b1b1b" strokeWidth="9" />
              <path d={windowOutline} stroke="#1b1b1b" strokeWidth="9" />
            </svg>
            <label htmlFor="layer-visible" className="ml-[5px] flex-1 text-[10px] text-[#b3c8e0]">
              (Curves)
            </label>
            <span className="grid place-items-center">
              <input
                id="layer-visible"
                type="checkbox"
                checked={visible}
                onChange={(event) => setVisible(event.target.checked)}
                className="col-start-1 row-start-1 size-[15px] appearance-none rounded-[3px] border border-[#222] bg-[#3b3b3b]"
              />
              {visible && (
                <svg
                  className="pointer-events-none col-start-1 row-start-1 size-[9px]"
                  viewBox="0 0 9 9"
                  fill="none"
                >
                  <path d="M1 5l2 3 5-7" stroke="#fff" strokeWidth="1.5" />
                </svg>
              )}
            </span>
          </li>
        </ul>
        <div className="w-[14px] bg-[#323232]" />
      </div>
      <div className="flex h-[23px] shrink-0 items-center border-t border-[#272727] pr-2 pl-1 text-[#a8a8a8]">
        <button
          aria-label="Edit all layers"
          className="mr-auto flex h-5 w-[21px] items-center justify-center bg-[#333]"
        >
          <svg className="h-3 w-4" viewBox="0 0 16 12" fill="none" stroke="currentColor" strokeWidth="1.5">
            <path d="M0 0l8 4 8-4z" fill="currentColor" strokeWidth="0" />
            <path d="M0 3.5l8 4 8-4M0 7l8 4 8-4" />
          </svg>
        </button>
        <button aria-label="Mask layer">
          <svg className="h-3 w-[14px]" viewBox="0 0 14 12">
            <path d="M0 0h14v12H0z" fill="currentColor" />
            <circle cx="7" cy="6" r="4" fill="#333" />
          </svg>
        </button>
        <button aria-label="Adjustments" className="ml-2.5">
          <svg className="size-3" viewBox="0 0 12 12">
            <circle cx="6" cy="6" r="5.3" fill="none" stroke="currentColor" />
            <path d="M2 10A5.3 5.3 0 0 1 10 2z" fill="currentColor" />
          </svg>
        </button>
        <button
          aria-label="Layer effects"
          className="ml-2 w-[15px] font-['Liberation_Serif',serif] text-[16px] leading-5 italic"
        >
          fx
        </button>
        <button aria-label="Add layer" className="ml-[58px]">
          <svg className="h-3 w-[10px]" viewBox="0 0 10 12" fill="none" stroke="currentColor">
            <path d="M.5.5h5l4 4v7h-9zM5.5.5v4h4" />
          </svg>
        </button>
        <button aria-label="Add pixel layer" className="ml-[13px]">
          <svg className="h-3 w-[10px]" viewBox="0 0 10 12">
            <path d="M.5.5h9v11h-9z" fill="none" stroke="currentColor" />
            <path
              d="M1 1h2v2H1zM5 1h2v2H5zM3 3h2v2H3zM7 3h2v2H7zM1 5h2v2H1zM5 5h2v2H5zM3 7h2v2H3zM7 7h2v2H7zM1 9h2v2H1zM5 9h2v2H5z"
              fill="currentColor"
            />
          </svg>
        </button>
        <button aria-label="Delete layer" className="ml-3">
          <svg className="h-[13px] w-[10px]" viewBox="0 0 10 13" fill="none" stroke="currentColor">
            <path d="M0 2.5h10M3.5 2V.5h3V2M1.5 4v8.5h7V4M3.5 4v8M5 4v8M6.5 4v8" />
          </svg>
        </button>
      </div>
    </section>
  );
}

function TransformField({ label, value }) {
  return (
    <div className="flex items-center">
      <label htmlFor={`transform-${label}`} className="w-[17px] pr-1 text-right">
        {label}:
      </label>
      <input
        id={`transform-${label}`}
        defaultValue={value}
        className="h-[19px] w-[60px] rounded-[3px] border border-[#282828] bg-[#333] px-[2px] text-[10px] font-medium text-[#ececec]"
      />
    </div>
  );
}

function TransformPanel() {
  return (
    <section className="shrink-0 border-t-2 border-[#2c2c2c]">
      <PanelTabs tabs={["Transform"]} />
      <div className="flex h-[100px] pt-2.5 pl-[15px] text-[10px] text-[#d4d4d4]">
        <svg className="mt-2 h-[42px] w-[40px]" viewBox="0 0 40 42" fill="#b2b2b2">
          <path d="M5 5h33v33H5z" fill="#696969" />
          <path d="M18 2h6v6h-6zM34 2h6v6h-6zM2 19h6v6H2zM18 19h6v6h-6zM34 19h6v6h-6zM2 35h6v6H2zM18 35h6v6h-6zM34 35h6v6h-6z" />
          <path d="M0 0h10v10H0z" fill="#fff" />
        </svg>
        <div className="ml-[15px] grid auto-rows-min grid-cols-[77px_77px] gap-x-[7px] gap-y-[3px]">
          <TransformField label="X" value="147.7 mm" />
          <TransformField label="W" value="33.7 mm" />
          <TransformField label="Y" value="34.8 mm" />
          <TransformField label="H" value="33.8 mm" />
          <div className="mt-2.5 flex items-center">
            <span className="w-[17px] pr-1 text-right">R:</span>
            <Picker label="Rotation" className="w-[60px]" options={["0 °", "90 °"]} />
          </div>
          <div className="mt-2.5 flex items-center">
            <span className="w-[17px] pr-1 text-right">S:</span>
            <Picker label="Shear" className="w-[60px]" options={["0 °", "15 °"]} />
          </div>
        </div>
        <button aria-label="Lock aspect ratio" className="mt-3.5 ml-2.5 self-start">
          <svg className="h-[14px] w-[6px]" viewBox="0 0 6 14" fill="none" stroke="#8f8f8f">
            <rect x="1" y=".5" width="4" height="5.5" rx="2" />
            <rect x="1" y="8" width="4" height="5.5" rx="2" />
            <path d="M3 4v6" />
          </svg>
        </button>
      </div>
    </section>
  );
}

/* ---------- dock ---------- */

function Tile({ fill, round = 2, children }) {
  return (
    <>
      <rect width="10" height="10" rx={round} fill={fill} />
      {children}
    </>
  );
}

function Sheet({ children }) {
  return (
    <>
      <path d="M2 0l7 1-1 9-7-1z" fill="#f4f4f2" />
      {children}
    </>
  );
}

const dockApps = [
  { name: "Finder", running: true, art: <Tile fill="#e8eef5"><path d="M0 1h5v9H0z" fill="#2f95ee" /><path d="M2 7c2 2 4 2 6 0" stroke="#123" fill="none" /></Tile> },
  { name: "Swift", art: <path d="M0 1l4 3 5-4-1 6-4 4-2-1z" fill="#f5a02c" /> },
  { name: "Siri", art: <Tile fill="#35255e" round={5}><path d="M2 6c2-4 4 2 6-2" stroke="#58d8f5" strokeWidth="2" fill="none" /></Tile> },
  { name: "System Preferences", badge: true, art: <Tile fill="#a5a9ab"><circle cx="5" cy="5" r="3" fill="none" stroke="#333" strokeWidth="2" strokeDasharray="1.5 .7" /></Tile> },
  { name: "Launchpad", art: <Tile fill="#a9b4bd" round={5}><path d="M2 6l6-4-3 6-1-2z" fill="#3d4e5c" /></Tile> },
  { name: "Mission Control", art: <Tile fill="#1b2127" round={1}><path d="M1 3h3v3H1z" fill="#2d9be8" /><path d="M5 2h4v3H5z" fill="#46c444" /><path d="M5 6h3v2H5z" fill="#e8a02a" /></Tile> },
  { name: "Safari", running: true, art: <Tile fill="#2f9cf2" round={5}><path d="M8 2L6 6 4 4z" fill="#f03b35" /><path d="M2 8l2-4 2 2z" fill="#fff" /></Tile> },
  { name: "PDF Expert", art: <Tile fill="#dd1c1f" round={1}><path d="M1 5h8" stroke="#fff" strokeWidth="2" strokeDasharray="2 1" /></Tile> },
  { name: "Chrome", art: <Tile fill="#f5c526" round={5}><path d="M0 4a5 5 0 0 1 10 0z" fill="#e2402f" /><path d="M0 4l4 6A5 5 0 0 1 0 4z" fill="#36a650" /><circle cx="5" cy="5" r="2" fill="#4a8cf5" stroke="#fff" /></Tile> },
  { name: "Affinity Designer", running: true, art: <Tile fill="#12b4f0" round={1}><path d="M4 0L1 6h9M3 6l2 4" stroke="#0868a8" fill="none" /></Tile> },
  { name: "Preview", art: <Tile fill="#8fb5d6" round={1}><path d="M0 6l4-3 6 5v2H0z" fill="#38628a" /><circle cx="6" cy="6" r="2" fill="#c5d3dc" /></Tile> },
  { name: "App Store", badge: true, art: <Tile fill="#1f83f2" round={5}><path d="M3 8l3-6M7 8L4 2M2 6h6" stroke="#fff" /></Tile> },
  { name: "Scanner", art: <Tile fill="#aab4bf" round={1}><path d="M0 3h8v2H0z" fill="#44597b" /><path d="M1 7h8v1H1z" fill="#fff" /></Tile> },
  { name: "Glue", art: <><rect x="2" y="3" width="7" height="7" rx="2" fill="#e88b2b" /><path d="M4 0h3v3H4z" fill="#f1d9a2" /><path d="M3 5h5v2H3z" fill="#f8ecd2" /></> },
  { name: "TextEdit", art: <Sheet><path d="M6 2L4 8" stroke="#777" /></Sheet> },
  { name: "Contacts", art: <Tile fill="#9a6b3c" round={1}><circle cx="5" cy="5" r="2" fill="#6d4824" /></Tile> },
  { name: "Spotify", art: <Tile fill="#1ed05f" round={5}><path d="M2 4c2-1 4-1 6 0M3 6c2-1 3-1 5 0" stroke="#111" fill="none" /></Tile> },
  { name: "Calendar", art: <Sheet><path d="M2 0l7 1v2l-7-1z" fill="#e8433a" /><path d="M4 4h3v4H4z" fill="#888" /></Sheet> },
  { name: "Calculator", art: <Tile fill="#555b60" round={1}><path d="M7 2h3v8H7z" fill="#f08a24" /><path d="M1 1h8v2H1z" fill="#ccc" /></Tile> },
  { name: "Reminders", art: <Sheet><path d="M3 3v5" stroke="#e8584a" strokeDasharray="1 1" /></Sheet> },
  { name: "Maps", art: <Sheet><path d="M2 0l4 1-4 6z" fill="#69c45c" /><path d="M5 5l3 1v3l-4-1z" fill="#5aa7e8" /></Sheet> },
  { name: "Notes", art: <Sheet><path d="M2 0l7 1v2l-7-1z" fill="#f4cd36" /></Sheet> },
  { name: "Messages", art: <Tile fill="#31cf58"><path d="M2 3h5v3H2zM5 5h3v3H5z" fill="#fff" /></Tile> },
  { name: "Camera", art: <Tile fill="#c2c6c8" round={1}><path d="M2 3l5-1 1 6H1z" fill="#2c3136" /><path d="M4 6h2v2H4z" fill="#f0ab2a" /></Tile> },
  { name: "Webcam", art: <Tile fill="#70767a" round={1}><circle cx="5" cy="4" r="3" fill="#222" stroke="#ccc" /></Tile> },
  { name: "Photo Booth", art: <Tile fill="#a4262b" round={1}><path d="M1 2h3M5 3h4M1 6h4M6 7h3" stroke="#3b1012" strokeWidth="2" /></Tile> },
  { name: "Photos", art: <Tile fill="#f6f6f6" round={5}><circle cx="4" cy="4" r="2" fill="#f07a2a" /><circle cx="6" cy="4" r="2" fill="#e9c928" /><circle cx="6" cy="6" r="2" fill="#46b45a" /><circle cx="4" cy="6" r="2" fill="#c5449c" /></Tile> },
  { name: "News", art: <Tile fill="#f6f6f6" round={5}><path d="M3 8V2l4 6V2" stroke="#ee2f4e" strokeWidth="1.5" fill="none" /></Tile> },
  { name: "Music", art: <Tile fill="#f6f6f6" round={5}><path d="M4 7V3l3-1v4" stroke="#e746a0" fill="none" /></Tile> },
  { name: "Podcasts", art: <Tile fill="#a734d2" round={5}><circle cx="5" cy="4" r="2" fill="none" stroke="#fff" /><path d="M5 5v3" stroke="#fff" /></Tile> },
  { name: "Books", art: <Tile fill="#f5831c" round={5}><path d="M2 3h6v4H2z" fill="#fff" /></Tile> },
  { name: "WhatsApp", art: <Tile fill="#2fc351" round={5}><circle cx="5" cy="5" r="3" fill="none" stroke="#fff" /></Tile> },
  { name: "Cloud", badge: true, art: <Tile fill="#1e8ce8" round={4}><path d="M4 6h5v3H4z" fill="#fff" /></Tile> },
  { name: "Evernote", art: <Tile fill="#f6f6f6" round={5}><path d="M3 2h4v5H5L3 5z" fill="#20b04a" /></Tile> },
  { name: "Things", art: <Tile fill="#e5eaf0" round={1}><path d="M1 1h8v7H1z" fill="#31528c" /><path d="M3 4l2 2 3-3" stroke="#fff" fill="none" /></Tile> },
  { name: "Solitaire", art: <Sheet><path d="M4 3h2v2H4zM5 6h2v2H5z" fill="#d0569c" /></Sheet> },
  { name: "GarageBand", art: <path d="M0 6l5-1 4-5 1 2-3 4v4H1z" fill="#9a5c2c" /> },
  { name: "QuickTime", art: <Tile fill="#283238" round={5}><circle cx="5" cy="5" r="3" fill="none" stroke="#3f8cf0" strokeWidth="2" /></Tile> },
  { name: "Pages", art: <Sheet><path d="M3 3h5M3 6l4-2" stroke="#f09a2a" strokeWidth="2" /></Sheet> },
  { name: "Keynote", art: <Sheet><path d="M2 3h3v3H2zM5 5h4v4H5z" fill="#3c94e0" /></Sheet> },
  { name: "Image Capture", art: <Tile fill="#534549" round={1}><circle cx="5" cy="5" r="2.5" fill="#c2a8b2" /></Tile> },
  { name: "Numbers", art: <><path d="M0 6h2v4H0z" fill="#35c2e0" /><path d="M2.5 4h2v6h-2zM5 2h2v8H5z" fill="#3ec45c" /><path d="M7.500 0h2v10h-2z" fill="#f0563c" /></> },
  { name: "Premiere", art: <Tile fill="#190a26" round={0}><path d="M4 3l3 2-3 2z" fill="none" stroke="#e839b8" /></Tile> },
  { name: "OneDrive", art: <path d="M0 7c0-2 2-3 3-2 1-3 5-2 5 0 3 0 2 4 0 4H2C1 9 0 8 0 7z" fill="#1f7fd2" /> },
  { name: "Affinity Photo", art: <Tile fill="#b24be0" round={1}><path d="M1 9l5-8M3 9l6-6M5 9l4-2" stroke="#f0b8f5" /></Tile> },
  { name: "Disc Burner", art: <Tile fill="#4b3a2c" round={5}><path d="M2 5h6" stroke="#e88b4a" strokeWidth="2" /></Tile> },
  { name: "Shield", art: <Tile fill="#d84a2a" round={1}><path d="M5 3h4v6H6z" fill="#7c1d1a" /><path d="M1 3h3v4H1z" fill="#f0a43c" /></Tile> },
];

const dockUtilities = [
  { name: "Disk Utility", art: <><path d="M1 2h8v7H1z" fill="#b9bdbf" /><circle cx="4" cy="5" r="2" fill="none" stroke="#555" /></> },
  { name: "Cloud backup", art: <Tile fill="#5f2a9c" round={1}><path d="M2 7c0-3 2-4 3-2 2-1 3 0 3 2z" fill="none" stroke="#fff" /></Tile> },
  { name: "Presentation", art: <><path d="M1 1h8v4H1z" fill="#37b4f0" /><path d="M5 5v4M3 9.500h4" stroke="#e8eef2" /></> },
];

const dockFiles = [
  { name: "Document", art: <Sheet><path d="M3 3l2 1M5 5l2 2" stroke="#7c2d2a" strokeWidth="2" /></Sheet> },
  { name: "Portrait", art: <Tile fill="#c9b78a" round={0}><circle cx="5" cy="4" r="2.5" fill="#4b2f22" /><path d="M2 7h6v3H2z" fill="#2c2c2c" /></Tile> },
  { name: "Updater", art: <Tile fill="#7ac62a" round={5}><path d="M2 6c1-3 5-3 6 0zM5 5v3" stroke="#fff" fill="none" /></Tile> },
];

function DockItem({ item }) {
  return (
    <li className="flex h-[10px] items-center">
      <button aria-label={item.name} className="relative size-[10px]">
        <svg className="size-[10px]" viewBox="0 0 10 10">
          {item.art}
        </svg>
        {item.badge && (
          <span className="absolute -top-0.5 -right-1 size-[5px] rounded-full bg-[#f52a2e]" />
        )}
      </button>
      {item.running && <span className="ml-0.5 size-[3px] rounded-full bg-[#161616]" />}
    </li>
  );
}

function DockDivider() {
  return <li className="my-px h-px w-[14px] bg-[#5c605b]" />;
}

function Dock() {
  return (
    <div className="flex w-[23px] shrink-0 bg-linear-to-b from-[#6b6f6b] to-[#4b4d4a] py-[5px] pl-[3px]">
      <ul className="flex w-5 flex-col justify-between rounded-l-[5px] border-l border-[#a8aca6] bg-[#8f958d] py-[2px] pl-0.5">
        {dockApps.map((item) => (
          <DockItem key={item.name} item={item} />
        ))}
        <DockDivider />
        {dockUtilities.map((item) => (
          <DockItem key={item.name} item={item} />
        ))}
        <DockDivider />
        {dockFiles.map((item) => (
          <DockItem key={item.name} item={item} />
        ))}
        {Array.from({ length: 13 }).map((_, i) => (
          <DockItem
            key={i}
            item={{
              name: `Minimised window ${i + 1}`,
              art: (
                <>
                  <path d="M0 2h10v6H0z" fill="#fff" />
                  <circle cx="8.5" cy="8" r="1.5" fill="#2b86d8" />
                </>
              ),
            }}
          />
        ))}
        <DockItem item={{ name: "Trash", art: <path d="M1 0h8L8 10H2z" fill="#e2e5e4" /> }} />
      </ul>
    </div>
  );
}

export default function App() {
  return (
    <div className="flex h-screen flex-col overflow-hidden bg-black font-['Inter',sans-serif] whitespace-nowrap">
      <MenuBar />
      <div className="flex min-h-0 flex-1 pt-px">
        <div className="flex min-w-0 flex-1 flex-col overflow-hidden rounded-lg border border-[#6a6a6a] bg-[#333]">
          <MainToolbar />
          <ContextToolbar />
          <div className="flex min-h-0 flex-1">
            <ToolsPanel />
            <DocumentArea />
            <aside className="flex w-[349px] shrink-0 flex-col border-l-2 border-[#2a2a2a] bg-[#414141]">
              <ColourPanel />
              <LayersPanel />
              <TransformPanel />
            </aside>
          </div>
          <footer className="h-5 shrink-0 bg-[#333] pl-[19px] text-[10px] leading-5 text-[#bdbdbd]">
            &apos;Curves&apos; selected. <b className="text-white">Drag</b> to move selection.{" "}
            <b className="text-white">Click</b> another object to select it.{" "}
            <b className="text-white">Click</b> on an empty area to deselect selection.
          </footer>
        </div>
        <Dock />
      </div>
    </div>
  );
}
